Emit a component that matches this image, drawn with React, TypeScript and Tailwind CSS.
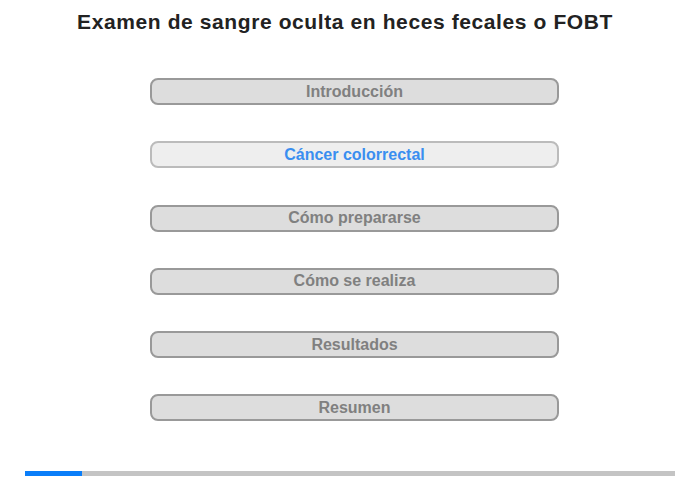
import React from "react";

const items = ["Introducción", "Cáncer colorrectal", "Cómo prepararse", "Cómo se realiza", "Resultados", "Resumen"];

export default function App() {
  return (
    <div className="w-[700px] h-[480px] bg-white flex flex-col items-center" style={{ fontFamily: '"Liberation Sans", Arial, sans-serif' }}>
      <h1 className="mt-[8px] -ml-[10px] text-[21px] leading-[28px] tracking-[0.6px] font-bold text-[#222]">Examen de sangre oculta en heces fecales o FOBT</h1>
      <div className="mt-[42px] ml-[9px] flex flex-col gap-[36.3px]">
        {items.map((t, i) => (
          <div
            key={t}
            className={
              i === 1
                ? "w-[409px] h-[27px] rounded-[8px] border-2 border-[#bbbbbb] bg-[#eeeeee] flex items-center justify-center text-[16px] font-bold text-[#3a8ef0]"
                : "w-[409px] h-[27px] rounded-[8px] border-2 border-[#999999] bg-[#dddddd] flex items-center justify-center text-[16px] font-bold text-[#808080]"
            }
          >
            {t}
          </div>
        ))}
      </div>
      <div className="mt-[50px] w-[650px] h-[5px] bg-[#c4c4c4] flex">
        <div className="w-[57px] h-full bg-[#0a7ef9]" />
      </div>
    </div>
  );
}
